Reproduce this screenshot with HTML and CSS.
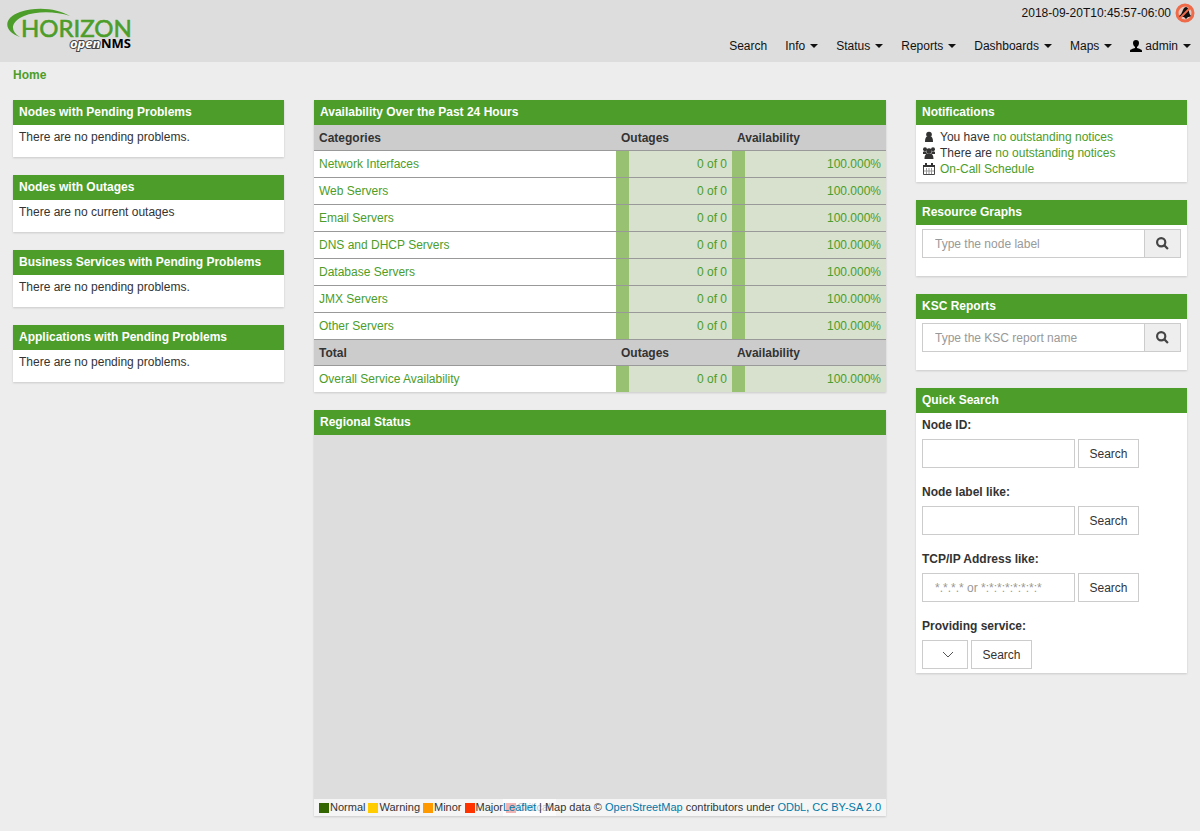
FILE: index.html
```html
<!DOCTYPE html>
<html lang="en">
<head>
    <meta charset="UTF-8">
    <meta name="viewport" content="width=device-width, initial-scale=1.0">
    <title>OpenNMS Web Console</title>
    <link rel="stylesheet" href="styles.css">
</head>
<body>
    <header class="header">
        <a href="#" class="logo" aria-label="Horizon OpenNMS">
            <svg width="130" height="46" viewBox="5 7 130 46">
                <path class="logo-swoosh" d="M20 37 C3 31 3 18 20 12 C38 6 58 9 70 16 C55 11 36 11 24 16 C10 22 10 31 20 37 Z"/>
                <text class="logo-name" x="21" y="37">HORIZON</text>
                <text class="logo-open" x="70" y="48">open</text>
                <text class="logo-nms" x="101" y="48">NMS</text>
            </svg>
        </a>
        <div class="header-right">
            <div class="header-time">
                <span>2018-09-20T10:45:57-06:00</span>
                <svg class="notice-icon" width="20" height="20" viewBox="0 0 20 20">
                    <circle cx="10" cy="10" r="8" fill="#e6c4ba" stroke="#ee6a48" stroke-width="3"/>
                    <path d="M4 13 C8 11 7 5 11 4 C15 5 13 10 16 13 L14 14 H5 Z M9 14 H13 L11 16 Z" fill="#111"/>
                    <path d="M5 15 L15 5" stroke="#ee6a48" stroke-width="2"/>
                </svg>
            </div>
            <nav class="nav">
                <a href="#">Search</a>
                <a href="#">Info <span class="caret"></span></a>
                <a href="#">Status <span class="caret"></span></a>
                <a href="#">Reports <span class="caret"></span></a>
                <a href="#">Dashboards <span class="caret"></span></a>
                <a href="#">Maps <span class="caret"></span></a>
                <a href="#"><svg class="nav-user" width="12" height="12" viewBox="0 0 12 12"><path d="M6 0 C8 0 9 1 9 3 C9 5 8 6 7 7 V8 C9 9 12 9 12 11 V12 H0 V11 C0 9 3 9 5 8 V7 C4 6 3 5 3 3 C3 1 4 0 6 0 Z"/></svg>admin <span class="caret"></span></a>
            </nav>
        </div>
    </header>

    <div class="breadcrumb"><a href="#">Home</a></div>

    <main class="row">
        <!-- Left column -->
        <div class="col col-side">
            <section class="panel">
                <h3 class="panel-heading">Nodes with Pending Problems</h3>
                <div class="panel-body panel-text">There are no pending problems.</div>
            </section>
            <section class="panel">
                <h3 class="panel-heading">Nodes with Outages</h3>
                <div class="panel-body panel-text">There are no current outages</div>
            </section>
            <section class="panel">
                <h3 class="panel-heading">Business Services with Pending Problems</h3>
                <div class="panel-body panel-text">There are no pending problems.</div>
            </section>
            <section class="panel">
                <h3 class="panel-heading">Applications with Pending Problems</h3>
                <div class="panel-body panel-text">There are no pending problems.</div>
            </section>
        </div>

        <!-- Middle column -->
        <div class="col col-main">
            <section class="panel">
                <h3 class="panel-heading">Availability Over the Past 24 Hours</h3>
                <table class="availability">
                    <colgroup>
                        <col>
                        <col class="col-outages">
                        <col class="col-avail">
                    </colgroup>
                    <thead>
                        <tr><th>Categories</th><th>Outages</th><th>Availability</th></tr>
                    </thead>
                    <tbody>
                        <tr><td><a href="#">Network Interfaces</a></td><td class="normal">0 of 0</td><td class="normal">100.000%</td></tr>
                        <tr><td><a href="#">Web Servers</a></td><td class="normal">0 of 0</td><td class="normal">100.000%</td></tr>
                        <tr><td><a href="#">Email Servers</a></td><td class="normal">0 of 0</td><td class="normal">100.000%</td></tr>
                        <tr><td><a href="#">DNS and DHCP Servers</a></td><td class="normal">0 of 0</td><td class="normal">100.000%</td></tr>
                        <tr><td><a href="#">Database Servers</a></td><td class="normal">0 of 0</td><td class="normal">100.000%</td></tr>
                        <tr><td><a href="#">JMX Servers</a></td><td class="normal">0 of 0</td><td class="normal">100.000%</td></tr>
                        <tr><td><a href="#">Other Servers</a></td><td class="normal">0 of 0</td><td class="normal">100.000%</td></tr>
                    </tbody>
                    <tbody>
                        <tr><th>Total</th><th>Outages</th><th>Availability</th></tr>
                        <tr><td><a href="#">Overall Service Availability</a></td><td class="normal">0 of 0</td><td class="normal">100.000%</td></tr>
                    </tbody>
                </table>
            </section>

            <section class="panel">
                <h3 class="panel-heading">Regional Status</h3>
                <div class="map">
                    <div class="legend">
                        <span><i class="sev-normal"></i>Normal</span>
                        <span><i class="sev-warning"></i>Warning</span>
                        <span><i class="sev-minor"></i>Minor</span>
                        <span><i class="sev-major"></i>Major</span>
                        <span><i class="sev-critical"></i>Critical</span>
                    </div>
                    <div class="attribution"><a href="#">Leaflet</a> | Map data © <a href="#">OpenStreetMap</a> contributors under <a href="#">ODbL</a>, <a href="#">CC BY-SA 2.0</a></div>
                </div>
            </section>
        </div>

        <!-- Right column -->
        <div class="col col-side">
            <section class="panel">
                <h3 class="panel-heading">Notifications</h3>
                <ul class="panel-body notices">
                    <li>
                        <svg width="14" height="12" viewBox="0 0 14 12"><circle cx="7" cy="3.500" r="2.800"/><path d="M3 11 C3 7 4 6 5 5.500 H9 C10 6 11 7 11 11 Z"/></svg>
                        <span>You have <a href="#">no outstanding notices</a></span>
                    </li>
                    <li>
                        <svg width="14" height="12" viewBox="0 0 14 12"><circle cx="3" cy="2.200" r="2"/><circle cx="11" cy="2.200" r="2"/><circle cx="7" cy="4" r="2.700"/><path d="M1 7 V5 Q2 4 4 4.500 L5 7 Z M13 7 V5 Q12 4 10 4.500 L9 7 Z M2.500 12 C2.500 8 4 7 5 6.500 H9 C10 7 11.500 8 11.500 12 Z"/></svg>
                        <span>There are <a href="#">no outstanding notices</a></span>
                    </li>
                    <li>
                        <svg width="14" height="12" viewBox="0 0 14 12"><path fill="none" stroke="#999" d="M4.500 5 V11 M7 5 V11 M9.500 5 V11 M2 8 H12"/><path fill="none" stroke="#444" d="M1.500 2.500 H12.500 V11.500 H1.500 Z"/><path d="M1 2 H13 V4 H1 Z M3 0 H5 V3 H3 Z M9 0 H11 V3 H9 Z"/></svg>
                        <a href="#">On-Call Schedule</a>
                    </li>
                </ul>
            </section>

            <section class="panel">
                <h3 class="panel-heading">Resource Graphs</h3>
                <form class="panel-body input-group">
                    <input type="text" class="form-control" placeholder="Type the node label" aria-label="Node label">
                    <button type="button" class="btn-icon" aria-label="Search"><svg width="13" height="13" viewBox="0 0 12 12"><circle cx="4.800" cy="4.800" r="3.800"/><path d="M7.500 7.500 L11 11"/></svg></button>
                </form>
            </section>

            <section class="panel">
                <h3 class="panel-heading">KSC Reports</h3>
                <form class="panel-body input-group">
                    <input type="text" class="form-control" placeholder="Type the KSC report name" aria-label="KSC report name">
                    <button type="button" class="btn-icon" aria-label="Search"><svg width="13" height="13" viewBox="0 0 12 12"><circle cx="4.800" cy="4.800" r="3.800"/><path d="M7.500 7.500 L11 11"/></svg></button>
                </form>
            </section>

            <section class="panel">
                <h3 class="panel-heading">Quick Search</h3>
                <form class="panel-body quick-search">
                    <div class="form-group">
                        <label for="nodeId">Node ID:</label>
                        <div class="controls">
                            <input type="text" id="nodeId" class="form-control">
                            <button type="button" class="btn">Search</button>
                        </div>
                    </div>
                    <div class="form-group">
                        <label for="nodename">Node label like:</label>
                        <div class="controls">
                            <input type="text" id="nodename" class="form-control">
                            <button type="button" class="btn">Search</button>
                        </div>
                    </div>
                    <div class="form-group">
                        <label for="iplike">TCP/IP Address like:</label>
                        <div class="controls">
                            <input type="text" id="iplike" class="form-control" placeholder="*.*.*.* or *:*:*:*:*:*:*:*">
                            <button type="button" class="btn">Search</button>
                        </div>
                    </div>
                    <div class="form-group">
                        <label for="service">Providing service:</label>
                        <div class="controls">
                            <div class="select">
                                <select id="service"></select>
                                <svg width="12" height="7" viewBox="0 0 12 7"><path d="M1 1 L6 6 L11 1"/></svg>
                            </div>
                            <button type="button" class="btn">Search</button>
                        </div>
                    </div>
                </form>
            </section>
        </div>
    </main>
</body>
</html>
```
FILE: styles.css
```css
:root {
    --green: #4c9d29;
    --grey-bg: #ededed;
    --header-bg: #dddddd;
    --border: #cccccc;
    --text: #333333;
}

* {
    box-sizing: border-box;
}

body {
    margin: 0;
    background: var(--grey-bg);
    font-family: "Liberation Sans", Arial, sans-serif;
    font-size: 12px;
    line-height: 16px;
    color: var(--text);
    overflow-x: hidden;
}

a {
    color: var(--green);
    text-decoration: none;
}

/* Header */
.header {
    display: flex;
    justify-content: space-between;
    height: 62px;
    background: var(--header-bg);
}

.logo {
    padding: 7px 5px;
}

.logo-swoosh {
    fill: var(--green);
}

.logo-name {
    font-family: Lato, sans-serif;
    font-size: 24px;
    fill: var(--green);
    stroke: var(--green);
    stroke-width: 0.6px;
}

.logo-open,
.logo-nms {
    font-family: "Open Sans", sans-serif;
    font-size: 13px;
    font-weight: bold;
}

.logo-open {
    font-style: italic;
    fill: #fff;
    stroke: #444;
    stroke-width: 2px;
    paint-order: stroke;
}

.logo-nms {
    fill: #000;
}

.header-right {
    display: flex;
    flex-direction: column;
    align-items: flex-end;
    color: #111;
}

.header-time {
    display: flex;
    align-items: center;
    gap: 4px;
    height: 26px;
    padding-right: 5px;
}

.nav {
    display: flex;
    gap: 18px;
    padding: 12px 9px 0 0;
}

.nav a {
    display: flex;
    align-items: center;
    color: #111;
}

.nav-user {
    margin-right: 3px;
}

.caret {
    margin-left: 5px;
    border-top: 4px solid #111;
    border-left: 4px solid transparent;
    border-right: 4px solid transparent;
}

.breadcrumb {
    padding: 5px 13px 17px;
    font-weight: bold;
}

/* Columns */
.row {
    display: flex;
    margin: 0 -2px;
}

.col {
    padding: 0 15px;
}

.col-side {
    width: 25%;
}

.col-main {
    width: 50%;
}

/* Panels */
.panel {
    margin-bottom: 18px;
    background: #fff;
    box-shadow: 0 1px 2px rgba(0, 0, 0, 0.15);
}

.panel-heading {
    margin: 0;
    padding: 4px 6px 5px;
    background: var(--green);
    color: #fff;
    font-size: 12px;
    line-height: 16px;
}

.panel-body {
    padding: 4px 6px;
}

.panel-text {
    height: 32px;
}

/* Availability table */
.availability {
    width: 100%;
    border-collapse: separate;
    border-spacing: 0;
    table-layout: fixed;
}

.col-outages {
    width: 116px;
}

.col-avail {
    width: 154px;
}

.availability th,
.availability td {
    height: 27px;
    padding: 0 5px;
    border-bottom: 1px solid #999;
    text-align: left;
}

.availability th {
    height: 26px;
    background: #ccc;
}

.availability tbody:last-child td {
    height: 26px;
    border-bottom: none;
}

/* the severity bar is a gradient so that the row line stays straight */
.availability .normal {
    background: linear-gradient(to right, #99c172 13px, #d7e1cd 13px);
    color: var(--green);
    text-align: right;
}

/* Map */
.map {
    position: relative;
    height: 381px;
    background: #ddd;
    overflow: hidden;
}

.legend,
.attribution {
    position: absolute;
    bottom: 0;
    height: 17px;
    padding: 0 5px;
    font-size: 11px;
    line-height: 17px;
    white-space: nowrap;
    background: rgba(255, 255, 255, 0.7);
}

.legend {
    left: 0;
    display: flex;
    gap: 3px;
}

.legend span {
    display: flex;
    align-items: center;
    gap: 1px;
}

.legend i {
    width: 10px;
    height: 10px;
}

.sev-normal { background: #360; }
.sev-warning { background: #fc0; }
.sev-minor { background: #f90; }
.sev-major { background: #f30; }
.sev-critical { background: #c00; }

.attribution {
    right: 0;
    padding-left: 0;
}

.attribution a {
    color: #0078a8;
}

/* Notifications */
.notices {
    margin: 0;
    padding-bottom: 5px;
    list-style: none;
}

.notices li {
    display: flex;
    align-items: center;
    gap: 4px;
}

.notices svg {
    fill: #333;
}

/* Forms */
.form-control {
    min-width: 0;
    height: 29px;
    padding: 0 12px;
    border: 1px solid var(--border);
    background: #fff;
    color: var(--text);
    font: inherit;
}

.form-control::placeholder {
    color: #999;
    opacity: 1;
}

.input-group {
    display: flex;
    padding-bottom: 18px;
}

.input-group .form-control {
    flex: 1;
}

.btn-icon {
    display: flex;
    align-items: center;
    justify-content: center;
    width: 36px;
    height: 29px;
    padding: 0;
    border: 1px solid var(--border);
    border-left: none;
    background: #eee;
}

.btn-icon svg {
    fill: none;
    stroke: #444;
    stroke-width: 2;
}

.quick-search label {
    display: block;
    margin-bottom: 6px;
    font-weight: bold;
}

.form-group + .form-group {
    margin-top: 16px;
}

.controls {
    display: flex;
    gap: 3px;
}

.controls .form-control {
    width: 153px;
}

.btn {
    width: 61px;
    height: 29px;
    padding: 0;
    border: 1px solid var(--border);
    background: #fff;
    color: var(--text);
    font: inherit;
}

.select {
    position: relative;
}

.select select {
    width: 46px;
    height: 29px;
    border: 1px solid var(--border);
    background: #fff;
    appearance: none;
}

.select svg {
    position: absolute;
    top: 11px;
    right: 14px;
    fill: none;
    stroke: #555;
    pointer-events: none;
}
```
